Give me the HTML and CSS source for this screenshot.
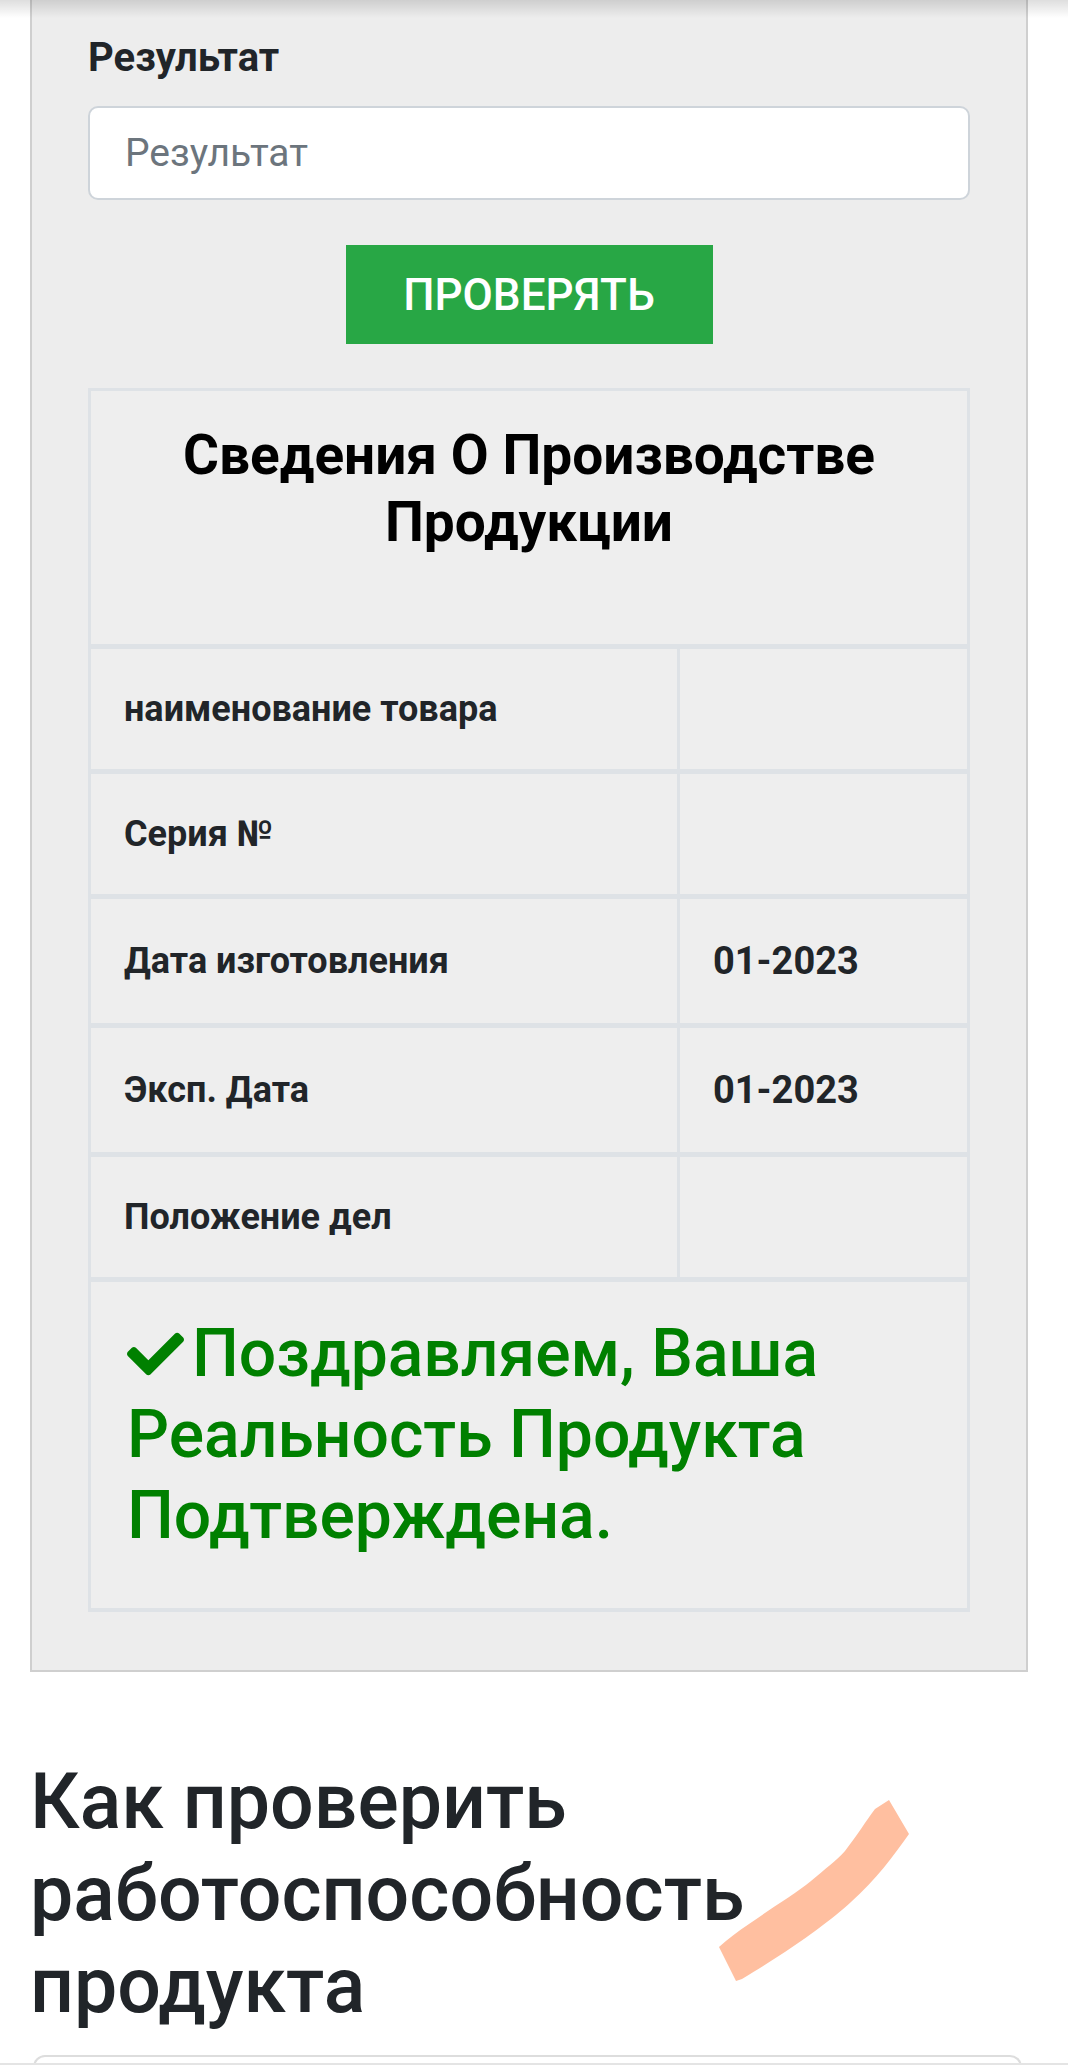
FILE: index.html
```html
<!DOCTYPE html>
<html lang="ru">
<head>
<meta charset="utf-8">
<title>Проверка продукта</title>
<link rel="stylesheet" href="styles.css">
</head>
<body>
<div class="topshadow"></div>
<main class="page">
  <section class="panel">
    <label class="field-label" for="result">Результат</label>
    <input id="result" class="field-input" type="text" placeholder="Результат">
    <div class="btn-row"><button class="btn-check" type="button">Проверять</button></div>

    <div class="info">
      <div class="info-head"><h3>Сведения О Производстве Продукции</h3></div>

      <div class="k">наименование товара</div><div class="v"></div>
      <div class="k">Серия №</div><div class="v"></div>
      <div class="k">Дата изготовления</div><div class="v">01-2023</div>
      <div class="k">Эксп. Дата</div><div class="v">01-2023</div>
      <div class="k">Положение дел</div><div class="v"></div>

      <div class="msg">
        <h2><svg class="check" viewBox="0 64 512 384" aria-hidden="true"><path d="M173.898 439.404l-166.4-166.4c-9.997-9.997-9.997-26.206 0-36.204l36.203-36.204c9.997-9.998 26.207-9.998 36.204 0L192 312.69 432.095 72.596c9.997-9.997 26.207-9.997 36.204 0l36.203 36.204c9.997 9.997 9.997 26.206 0 36.204l-294.4 294.401c-9.998 9.997-26.207 9.997-36.204-.001z"/></svg>Поздравляем, Ваша Реальность Продукта Подтверждена.</h2>
      </div>
    </div>
  </section>

  <section class="howto">
    <h2 class="howto-title">Как проверить работоспособность продукта</h2>
    <svg class="scribble" viewBox="0 1673 1068 400" aria-hidden="true">
      <path d="M889 1801 L909 1835 C895 1855 875 1882 851 1903 C830 1922 800 1945 742 1980 L736 1982 L719 1948 C728 1940 738 1932 749 1925 C770 1910 795 1895 811 1882 C825 1870 836 1862 845 1852 C858 1835 866 1822 875 1810 Z"/>
    </svg>
    <div class="card"></div>
  </section>
</main>
<div class="bottomline"></div>
</body>
</html>
```

FILE: styles.css
```css
* {
  box-sizing: border-box;
}

html, body {
  margin: 0;
  background: #ffffff;
}

body {
  font-family: Roboto, "Noto Sans", "Liberation Sans", sans-serif;
  color: #212529;
}

.topshadow {
  position: absolute;
  top: 0;
  left: 0;
  right: 0;
  height: 18px;
  background: linear-gradient(rgba(0, 0, 0, 0.13), rgba(0, 0, 0, 0));
  z-index: 5;
  pointer-events: none;
}

.bottomline {
  position: fixed;
  left: 0;
  right: 0;
  bottom: 0;
  height: 5px;
  border-top: 2px solid #e4e4e4;
  background: #ffffff;
  z-index: 5;
}

.page {
  position: relative;
}

.panel {
  margin: 0 40px 0 30px;
  background: #ededed;
  border: 2px solid #cfcfcf;
  border-top: 0;
  padding: 34px 56px 58px;
}

.field-label {
  display: block;
  font-size: 40px;
  font-weight: 700;
  line-height: 48px;
  margin-bottom: 24px;
}

.field-input {
  display: block;
  width: 100%;
  height: 94px;
  border: 2px solid #ced4da;
  border-radius: 10px;
  background: #ffffff;
  padding: 0 35px;
  font-family: Roboto, "Noto Sans", sans-serif;
  font-size: 39px;
  font-weight: 400;
  color: #495057;
  outline: none;
}

.field-input::placeholder {
  color: #6c757d;
  opacity: 1;
}

.btn-row {
  display: flex;
  justify-content: center;
  margin: 45px 0 44px;
}

.btn-check {
  width: 367px;
  height: 99px;
  padding: 0;
  border: 0;
  border-radius: 0;
  background: #28a745;
  color: #ffffff;
  font-family: Roboto, "Noto Sans", sans-serif;
  font-size: 44px;
  font-weight: 500;
  text-transform: uppercase;
}

.info {
  display: grid;
  grid-template-columns: 589px 1fr;
  border: 3px solid #dee2e6;
  border-bottom-width: 4px;
  background: #eeeeee;
}

.info-head {
  grid-column: 1 / -1;
  height: 258px;
  padding: 31px 20px 0;
  border-bottom: 5px solid #dee2e6;
}

.info-head h3 {
  margin: 0;
  font-size: 55px;
  line-height: 67px;
  font-weight: 700;
  color: #000000;
  text-align: center;
}

.k,
.v {
  display: flex;
  align-items: center;
  padding: 35px 20px 35px 33px;
  border-bottom: 5px solid #dee2e6;
  font-weight: 700;
}

.k {
  font-size: 36px;
  line-height: 50px;
  border-right: 3px solid #dee2e6;
}

.v {
  font-size: 38px;
  line-height: 54px;
}

.msg {
  grid-column: 1 / -1;
  padding: 31px 36px 52px;
}

.msg h2 {
  margin: 0;
  font-size: 66px;
  line-height: 81px;
  font-weight: 500;
  color: #008000;
}

.check {
  display: inline-block;
  width: 57px;
  height: 44px;
  margin-right: 8px;
  fill: #008000;
  vertical-align: baseline;
}

.howto {
  position: relative;
  padding: 84px 30px 0;
}

.howto-title {
  margin: 0 0 23px;
  font-size: 77px;
  line-height: 92px;
  font-weight: 500;
  color: #212529;
}

.scribble {
  position: absolute;
  left: 0;
  top: 0;
  width: 1068px;
  height: 400px;
  fill: #ffbfa0;
  pointer-events: none;
}

.card {
  margin: 0 16px 0 3px;
  height: 60px;
  border: 2px solid #dddddd;
  border-bottom: 0;
  border-radius: 12px 12px 0 0;
}
```
